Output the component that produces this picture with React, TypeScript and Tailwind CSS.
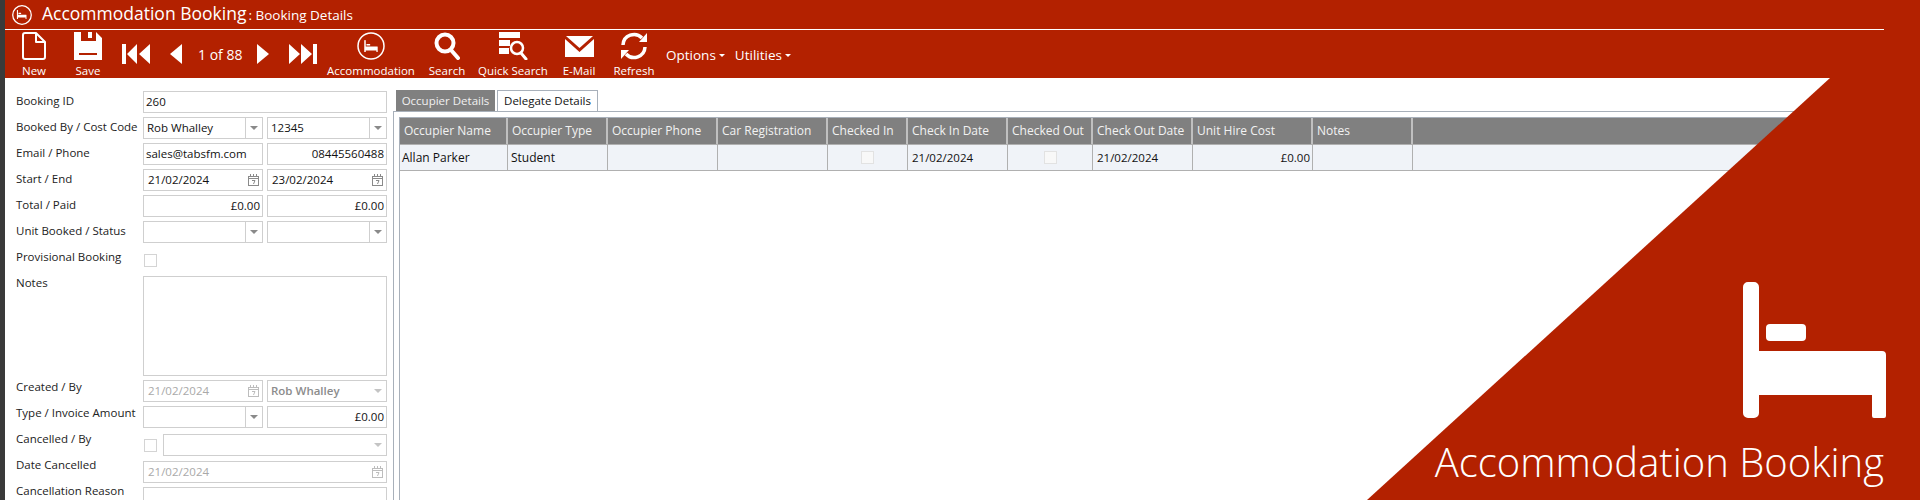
import React from "react";

const F = "[font-family:'Open_Sans','Noto_Sans',sans-serif]";

function BedGlyph({ className }: { className?: string }) {
  return (
    <svg viewBox="0 0 143 137" className={className} fill="currentColor">
      <path d="M5 0h6a5 5 0 0 1 5 5v64h123a4 4 0 0 1 4 4v61a2 2 0 0 1-2 2h-10a2 2 0 0 1-2-2v-21H16v18a5 5 0 0 1-5 5H5a5 5 0 0 1-5-5V5a5 5 0 0 1 5-5z" />
      <rect x="23" y="42" width="40" height="17" rx="4" />
    </svg>
  );
}

function BedCircle({ className = "", stroke = 1.5 }: { className?: string; stroke?: number }) {
  return (
    <span className={`relative flex items-center justify-center shrink-0 ${className}`}>
      <svg viewBox="0 0 28 28" className="absolute inset-0 w-full h-full" fill="none" stroke="currentColor" strokeWidth={stroke}>
        <circle cx="14" cy="14" r="13" />
      </svg>
      <BedGlyph className="w-[57%] h-[46%]" />
    </span>
  );
}

const icons: Record<string, React.ReactNode> = {
  New: (
    <svg width="24" height="28" viewBox="0 0 24 28" fill="none" stroke="currentColor" strokeWidth="2" strokeLinejoin="round">
      <path d="M3 1h11l9 9v15a2 2 0 0 1-2 2H3a2 2 0 0 1-2-2V3a2 2 0 0 1 2-2z" />
      <path d="M14 1v9h9" />
    </svg>
  ),
  Save: (
    <svg width="28" height="28" viewBox="0 0 28 28" fill="currentColor">
      <path fillRule="evenodd" d="M0 0h7v9h15V0l6 6v22H0zM5 21v2h18v-2z" />
      <rect x="14" y="0" width="4" height="6" />
    </svg>
  ),
  Accommodation: <BedCircle className="w-[28px] h-[28px]" />,
  Search: (
    <svg width="26" height="28" viewBox="0 0 26 28" fill="none" stroke="currentColor">
      <circle cx="11" cy="11" r="8.500" strokeWidth="4" />
      <path d="M17 18l7 8" strokeWidth="4" strokeLinecap="round" />
    </svg>
  ),
  "Quick Search": (
    <svg width="30" height="28" viewBox="0 0 30 28" fill="currentColor">
      <rect x="1" y="0" width="21" height="6" />
      <rect x="1" y="8" width="11" height="6" />
      <rect x="1" y="16" width="10" height="6" />
      <circle cx="19" cy="16" r="6" fill="none" stroke="currentColor" strokeWidth="2.500" />
      <path d="M23 21l5 6" stroke="currentColor" strokeWidth="3" strokeLinecap="round" />
    </svg>
  ),
  "E-Mail": (
    <svg width="29" height="28" viewBox="0 0 29 28" fill="currentColor">
      <path d="M1 4h27l-13.500 12z" />
      <path d="M0 7l14.500 13L29 7v18H0z" />
    </svg>
  ),
  Refresh: (
    <svg width="28" height="28" viewBox="0 0 28 28" fill="none" stroke="currentColor" strokeWidth="3.500">
      <path d="M3 13a11 11 0 0 1 19-7" />
      <path d="M25 15a11 11 0 0 1-19 7" />
      <path d="M19 10h8V1z" fill="currentColor" stroke="none" />
      <path d="M9 18H1v9z" fill="currentColor" stroke="none" />
    </svg>
  ),
};

function Tool({ label, className }: { label: string; className: string }) {
  return (
    <div className={`flex flex-col items-center shrink-0 h-full ${className}`}>
      <div className="h-[28px] mt-[2px] flex items-center justify-center">{icons[label]}</div>
      <div className="text-[11.5px] leading-[14px] mt-[4px] whitespace-nowrap">{label}</div>
    </div>
  );
}

const navShapes = {
  first: { w: 28, d: "M0 0h4v20H0zM15 0v20L5 10zM28 0v20L17 10z" },
  prev: { w: 12, d: "M12 0v20L0 10z" },
  next: { w: 12, d: "M0 0v20l12-10z" },
  last: { w: 28, d: "M0 0v20l11-10zM12 0v20l11-10zM24 0h4v20h-4z" },
};

function Nav({ kind, className }: { kind: keyof typeof navShapes; className: string }) {
  const p = navShapes[kind];
  return (
    <svg className={`shrink-0 mt-[14px] ${className}`} width={p.w} height="20" viewBox={`0 0 ${p.w} 20`} fill="currentColor">
      <path d={p.d} />
    </svg>
  );
}

function Menu({ label, className }: { label: string; className: string }) {
  return (
    <div className={`flex items-center shrink-0 mt-[17px] h-[16px] text-[13.5px] gap-[3px] ${className}`}>
      <span>{label}</span>
      <span className="w-0 h-0 border-x-[3.5px] border-x-transparent border-t-[3.5px] border-t-white mt-[1px]" />
    </div>
  );
}

function Arrow({ disabled }: { disabled?: boolean }) {
  return <span className={`w-0 h-0 border-x-[4px] border-x-transparent border-t-[4px] ${disabled ? "border-t-[#c4c4c4]" : "border-t-[#8a8a8a]"}`} />;
}

function Calendar({ disabled }: { disabled?: boolean }) {
  return (
    <svg width="11" height="12" viewBox="0 0 11 12" fill="none" stroke={disabled ? "#bdbdbd" : "#8a8a8a"} className="shrink-0">
      <rect x="0.500" y="2.500" width="10" height="9" />
      <path d="M2.500 0v3M5.500 0v3M8.500 0v3M1 4.500h9" />
      <path d="M4 6.500h3l-1.500 3.500" />
    </svg>
  );
}

const field = "h-[22px] border border-[#cfcfcf] bg-white flex items-center text-[11.5px]";

function Box({ text, right, className = "" }: { text?: string; right?: boolean; className?: string }) {
  return <div className={`${field} px-[2px] overflow-hidden text-[#111] ${right ? "justify-end" : ""} ${className}`}>{text}</div>;
}

function Select({ text, disabled, bold, noSep, className = "" }: { text?: string; disabled?: boolean; bold?: boolean; noSep?: boolean; className?: string }) {
  return (
    <div className={`${field} ${disabled ? "text-[#8c8c8c]" : "text-[#111]"} ${className}`}>
      <span className={`flex-1 pl-[3px] ${bold ? "font-semibold" : ""}`}>{text}</span>
      <span className={`w-[17px] h-full flex items-center justify-center ${noSep ? "" : "border-l border-[#cfcfcf]"}`}>
        <Arrow disabled={disabled} />
      </span>
    </div>
  );
}

function DateBox({ text, disabled }: { text: string; disabled?: boolean }) {
  return (
    <div className={`${field} justify-between pl-[4px] pr-[3px] ${disabled ? "text-[#a9a9a9]" : "text-[#111]"}`}>
      <span>{text}</span>
      <Calendar disabled={disabled} />
    </div>
  );
}

function Check({ className = "" }: { className?: string }) {
  return <span className={`block w-[13px] h-[13px] border shrink-0 ${className || "border-[#d4d4d4] bg-white"}`} />;
}

function Row({ label, children, className = "mb-[4px]", labelClass = "mt-[2px]" }: { label: string; children: React.ReactNode; className?: string; labelClass?: string }) {
  return (
    <div className={`flex shrink-0 ${className}`}>
      <div className={`w-[127px] h-[16px] shrink-0 text-[11.5px] leading-[16px] text-[#222] whitespace-nowrap ${labelClass}`}>{label}</div>
      <div className="w-[244px] shrink-0">{children}</div>
    </div>
  );
}

const Two = ({ children }: { children: React.ReactNode }) => <div className="grid grid-cols-[120px_120px] gap-x-[4px]">{children}</div>;

const columns = [
  { n: "Occupier Name", w: "w-[108px]" },
  { n: "Occupier Type", w: "w-[100px]" },
  { n: "Occupier Phone", w: "w-[110px]" },
  { n: "Car Registration", w: "w-[110px]" },
  { n: "Checked In", w: "w-[80px]" },
  { n: "Check In Date", w: "w-[100px]" },
  { n: "Checked Out", w: "w-[85px]" },
  { n: "Check Out Date", w: "w-[100px]" },
  { n: "Unit Hire Cost", w: "w-[120px]" },
  { n: "Notes", w: "w-[100px]" },
];

function Cell({ className, children }: { className: string; children?: React.ReactNode }) {
  return <div className={`shrink-0 h-full border-r border-[#b0b0b0] flex items-center ${className}`}>{children}</div>;
}

const cellCheck = "border-[#e2e2e2] bg-[#f8f8f8]";

export default function App() {
  return (
    <div className={`relative w-[1920px] h-[500px] overflow-hidden bg-[#3a3a3a] pl-[5px] ${F}`}>
      <div className="h-full flex flex-col bg-white">
        <div className="bg-[#b32100] text-white shrink-0">
          <div className="h-[29px] flex items-center pl-[7px]">
            <BedCircle className="w-[20px] h-[20px]" stroke={1.8} />
            <span className="ml-[10px] -mt-[3px] text-[17.5px] leading-[24px] whitespace-nowrap">Accommodation Booking</span>
            <span className="ml-[2px] mt-[1px] text-[13.5px] leading-[18px] whitespace-nowrap">: Booking Details</span>
          </div>
          <div className="h-px bg-white mr-[36px]" />
          <div className="h-[48px] flex pl-[9px]">
            <Tool label="New" className="w-[40px]" />
            <Tool label="Save" className="w-[40px] ml-[14px]" />
            <Nav kind="first" className="ml-[14px]" />
            <Nav kind="prev" className="ml-[20px]" />
            <span className="shrink-0 mt-[16px] ml-[16px] w-[42px] text-[14px] leading-[18px] whitespace-nowrap">1 of 88</span>
            <Nav kind="next" className="ml-[17px]" />
            <Nav kind="last" className="ml-[20px]" />
            <Tool label="Accommodation" className="w-[88px] ml-[10px]" />
            <Tool label="Search" className="w-[36px] ml-[14px]" />
            <Tool label="Quick Search" className="w-[70px] ml-[13px]" />
            <Tool label="E-Mail" className="w-[34px] ml-[14px]" />
            <Tool label="Refresh" className="w-[38px] ml-[19px]" />
            <Menu label="Options" className="ml-[13px]" />
            <Menu label="Utilities" className="ml-[10px]" />
          </div>
        </div>

        <div className="flex-1 flex min-h-0">
          <div className="w-[388px] shrink-0 pl-[11px] pt-[13px] flex flex-col overflow-hidden">
            <Row label="Booking ID"><Box text="260" /></Row>
            <Row label="Booked By / Cost Code"><Two><Select text="Rob Whalley" /><Select text="12345" /></Two></Row>
            <Row label="Email / Phone"><Two><Box text="sales@tabsfm.com" /><Box text="08445560488" right /></Two></Row>
            <Row label="Start / End"><Two><DateBox text="21/02/2024" /><DateBox text="23/02/2024" /></Two></Row>
            <Row label="Total / Paid"><Two><Box text="£0.00" right /><Box text="£0.00" right /></Two></Row>
            <Row label="Unit Booked / Status" className="mb-[6px]"><Two><Select /><Select /></Two></Row>
            <Row label="Provisional Booking" className="mb-[5px]" labelClass="mt-0"><div className="h-[22px] flex items-center pl-[1px]"><Check /></div></Row>
            <Row label="Notes" labelClass="-mt-px"><div className="h-[100px] border border-[#cfcfcf] bg-white" /></Row>
            <Row label="Created / By" labelClass="-mt-px"><Two><DateBox text="21/02/2024" disabled /><Select text="Rob Whalley" disabled bold noSep /></Two></Row>
            <Row label="Type / Invoice Amount" className="mb-[6px]" labelClass="-mt-px"><Two><Select /><Box text="£0.00" right /></Two></Row>
            <Row label="Cancelled / By" className="mb-[5px]" labelClass="-mt-[3px]"><div className="flex items-center gap-[6px] pl-[1px]"><Check /><Select disabled noSep className="flex-1" /></div></Row>
            <Row label="Date Cancelled" labelClass="-mt-[4px]"><DateBox text="21/02/2024" disabled /></Row>
            <Row label="Cancellation Reason" labelClass="-mt-[4px]"><div className="h-[60px] border border-[#cfcfcf] bg-white" /></Row>
          </div>

          <div className="flex-1 min-w-0 pt-[12px] flex flex-col">
            <div className="flex pl-[3px] gap-[2px] h-[21px] shrink-0 text-[11.5px]">
              <div className="w-[99px] bg-[#808080] text-[#f0f0f0] flex items-center justify-center whitespace-nowrap">Occupier Details</div>
              <div className="w-[101px] border border-b-0 border-[#a8b0ba] bg-white text-[#111] flex items-center justify-center whitespace-nowrap">Delegate Details</div>
            </div>
            <div className="flex-1 border-l border-t border-[#a8b0ba] pl-[5px] pt-[5px]">
              <div className="border-l border-[#a8b0ba] h-full text-[12px]">
                <div className="h-[27px] bg-[#808080] border-t border-[#a8b0ba] flex text-[#f2f2f2]">
                  {columns.map((c) => (
                    <div key={c.n} className={`shrink-0 h-full border-r-2 border-[#c0c0c0] flex items-center pl-[4px] whitespace-nowrap ${c.w}`}>{c.n}</div>
                  ))}
                </div>
                <div className="h-[27px] bg-[#f0f3f8] border-y border-[#b0b0b0] flex text-[#111]">
                  <Cell className="w-[108px] px-[2px]">Allan Parker</Cell>
                  <Cell className="w-[100px] px-[3px]">Student</Cell>
                  <Cell className="w-[110px]" />
                  <Cell className="w-[110px]" />
                  <Cell className="w-[80px] justify-center"><Check className={cellCheck} /></Cell>
                  <Cell className="w-[100px] px-[4px] text-[11.5px]">21/02/2024</Cell>
                  <Cell className="w-[85px] justify-center"><Check className={cellCheck} /></Cell>
                  <Cell className="w-[100px] px-[4px] text-[11.5px]">21/02/2024</Cell>
                  <Cell className="w-[120px] px-[2px] justify-end text-[11.5px]">£0.00</Cell>
                  <Cell className="w-[100px]" />
                </div>
              </div>
            </div>
          </div>
        </div>
      </div>

      <div className="absolute left-[1367px] top-[78px] w-[553px] h-[422px] bg-[#b32100] [clip-path:polygon(463px_0,100%_0,100%_100%,0_100%)] text-white">
        <BedGlyph className="absolute left-[376px] top-[204px] w-[143px] h-[137px]" />
        <div className="absolute right-[36px] top-[359px] text-[40px] leading-[50px] font-light whitespace-nowrap">Accommodation Booking</div>
      </div>
    </div>
  );
}
